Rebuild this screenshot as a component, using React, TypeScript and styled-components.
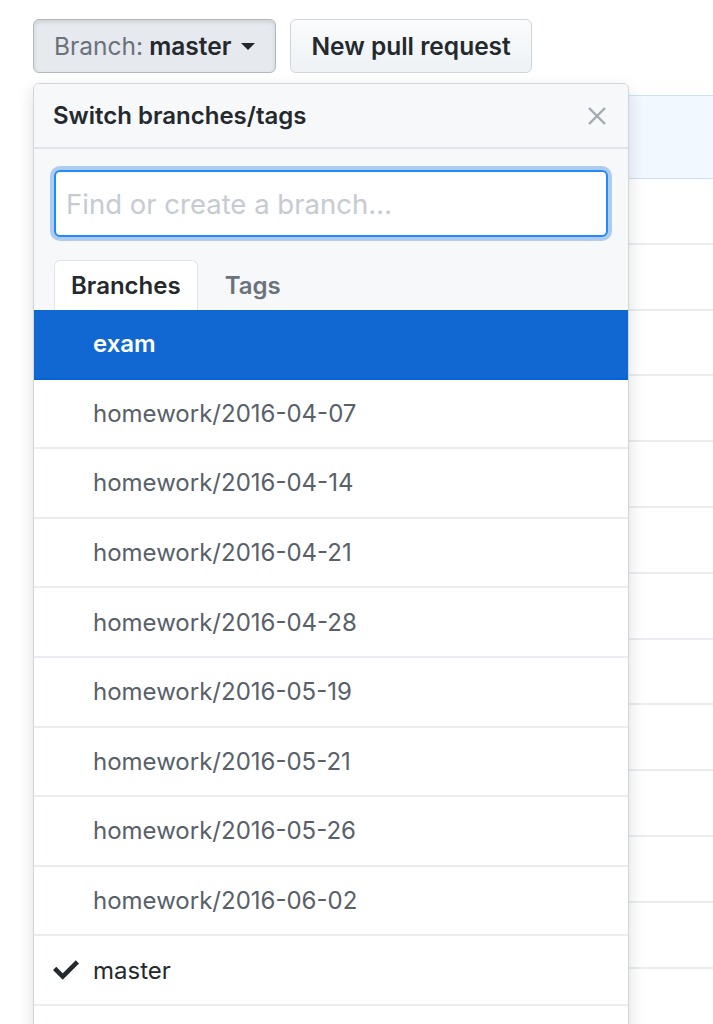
import React from 'react';
import styled, { createGlobalStyle } from 'styled-components';

const GlobalStyle = createGlobalStyle`
  html, body {
    margin: 0;
    padding: 0;
    background: #fff;
  }
  body {
    font-family: Inter, 'Liberation Sans', Arial, sans-serif;
    color: #24292e;
    -webkit-font-smoothing: antialiased;
  }
`;

const Page = styled.div`
  position: relative;
  width: 713px;
  height: 1024px;
  overflow: hidden;
  padding: 19px 0 0 33px;
  box-sizing: border-box;
`;

const Toolbar = styled.div`
  display: flex;
  gap: 14px;
`;

const Button = styled.button<{ $pressed?: boolean }>`
  display: flex;
  align-items: center;
  gap: 6px;
  height: 54px;
  padding: 0 20px;
  box-sizing: border-box;
  border: 1.5px solid ${p => (p.$pressed ? '#b5b9be' : '#d1d5da')};
  border-radius: 6px;
  background: ${p =>
    p.$pressed ? '#e6e9ed' : 'linear-gradient(#fafbfc, #eff3f6 90%)'};
  box-shadow: ${p => (p.$pressed ? 'inset 0 2px 4px rgba(27,31,35,0.12)' : 'none')};
  font-family: inherit;
  font-size: 24.5px;
  font-weight: 600;
  color: #24292e;
  cursor: pointer;
`;

const Muted = styled.span`
  color: #6a737d;
  font-weight: 400;
`;

const Caret = styled.span`
  display: inline-block;
  margin-left: 4px;
  border-top: 7px solid #24292e;
  border-left: 7px solid transparent;
  border-right: 7px solid transparent;
`;

/* table behind the menu */
const FileTable = styled.div`
  margin-top: 22px;
  width: 760px;
`;

const TableHead = styled.div`
  height: 84px;
  box-sizing: border-box;
  background: #f1f8ff;
  border: 1.5px solid #c8e1ff;
  border-right: none;
`;

const TableRow = styled.div`
  height: 65.8px;
  box-sizing: border-box;
  border-bottom: 2px solid #eaecef;
`;

/* dropdown */
const Menu = styled.div`
  position: absolute;
  top: 83px;
  left: 33px;
  width: 596px;
  padding-bottom: 60px;
  background: #fff;
  border: 1.5px solid #d1d5da;
  border-radius: 6px;
  box-shadow: 0 6px 16px rgba(27, 31, 35, 0.15);
  overflow: hidden;
  box-sizing: border-box;
`;

const MenuHeader = styled.div`
  display: flex;
  align-items: center;
  justify-content: space-between;
  height: 65px;
  padding: 0 21px 0 19px;
  background: #f6f8fa;
  border-bottom: 2px solid #e1e4e8;
  box-sizing: border-box;
`;

const MenuTitle = styled.span`
  font-size: 24px;
  font-weight: 600;
  color: #24292e;
`;

const CloseIcon = styled.svg`
  width: 20px;
  height: 20px;
  stroke: #a3aab1;
  stroke-width: 2.4;
`;

const FilterArea = styled.div`
  background: #f6f8fa;
  padding: 21px 20px 0 20px;
`;

const FilterInput = styled.input`
  display: block;
  width: 100%;
  height: 67px;
  box-sizing: border-box;
  padding: 0 10px;
  border: 2px solid #2188ff;
  border-radius: 6px;
  box-shadow: 0 0 0 4px rgba(3, 102, 214, 0.3);
  font-family: inherit;
  font-size: 27.5px;
  color: #24292e;
  outline: none;

  &::placeholder {
    color: #c6cbd1;
  }
`;

const Tabs = styled.div`
  display: flex;
  align-items: flex-end;
  margin-top: 23px;
  height: 50px;
`;

const Tab = styled.div<{ $active?: boolean }>`
  display: flex;
  align-items: center;
  height: 50px;
  padding: 0 16px;
  margin-right: 10px;
  box-sizing: border-box;
  font-size: 24px;
  font-weight: 600;
  color: ${p => (p.$active ? '#24292e' : '#6a737d')};
  background: ${p => (p.$active ? '#fff' : 'transparent')};
  border: 1.5px solid ${p => (p.$active ? '#e1e4e8' : 'transparent')};
  border-bottom: none;
  border-radius: 6px 6px 0 0;
`;

const Item = styled.div<{ $selected?: boolean }>`
  display: flex;
  align-items: center;
  height: 69.6px;
  padding-left: 19px;
  box-sizing: border-box;
  border-bottom: 2px solid ${p => (p.$selected ? '#0366d6' : '#eaecef')};
  background: ${p => (p.$selected ? '#1268d3' : '#fff')};
  color: ${p => (p.$selected ? '#fff' : '#586069')};
  font-size: 24px;
  font-weight: ${p => (p.$selected ? 600 : 400)};
`;

const CheckSlot = styled.span`
  display: flex;
  align-items: center;
  width: 40px;
  height: 30px;
`;

const CheckIcon = styled.svg`
  width: 26px;
  height: 26px;
  fill: #24292e;
`;

const ItemLabel = styled.span<{ $current?: boolean }>`
  color: ${p => (p.$current ? '#24292e' : 'inherit')};
`;

const branches = [
  'exam',
  'homework/2016-04-07',
  'homework/2016-04-14',
  'homework/2016-04-21',
  'homework/2016-04-28',
  'homework/2016-05-19',
  'homework/2016-05-21',
  'homework/2016-05-26',
  'homework/2016-06-02',
  'master',
];

export default function App() {
  const current = 'master';
  const selected = 'exam';

  return (
    <>
      <GlobalStyle />
      <Page>
        <Toolbar>
          <Button $pressed>
            <span>
              <Muted>Branch:</Muted> master
            </span>
            <Caret />
          </Button>
          <Button>New pull request</Button>
        </Toolbar>

        <FileTable>
          <TableHead />
          {Array.from({ length: 13 }).map((_, i) => (
            <TableRow key={i} />
          ))}
        </FileTable>

        <Menu>
          <MenuHeader>
            <MenuTitle>Switch branches/tags</MenuTitle>
            <CloseIcon viewBox="0 0 20 20">
              <line x1="2" y1="2" x2="18" y2="18" />
              <line x1="18" y1="2" x2="2" y2="18" />
            </CloseIcon>
          </MenuHeader>
          <FilterArea>
            <FilterInput placeholder="Find or create a branch…" />
            <Tabs>
              <Tab $active>Branches</Tab>
              <Tab>Tags</Tab>
            </Tabs>
          </FilterArea>
          {branches.map(name => (
            <Item key={name} $selected={name === selected}>
              <CheckSlot>
                {name === current && (
                  <CheckIcon viewBox="0 0 12 12">
                    <path d="M12 3l-7.5 7.5L0 6l1.5-1.5 3 3 6-6L12 3z" />
                  </CheckIcon>
                )}
              </CheckSlot>
              <ItemLabel $current={name === current}>{name}</ItemLabel>
            </Item>
          ))}
        </Menu>
      </Page>
    </>
  );
}
